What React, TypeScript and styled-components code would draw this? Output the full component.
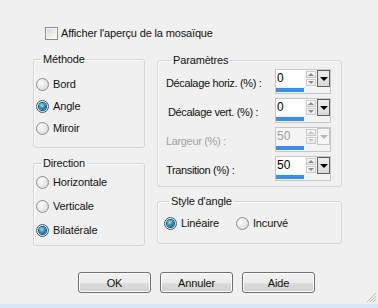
import React from "react";
import styled, { createGlobalStyle, css } from "styled-components";

const Global = createGlobalStyle`
  html, body { margin: 0; padding: 0; background: #f0f0f0; }
  body { font-family: "Liberation Sans", Arial, sans-serif; font-size: 11px; color: #111; letter-spacing: -0.15px; }
  * { box-sizing: border-box; }
`;

const Dialog = styled.div`
  position: relative;
  width: 378px;
  height: 308px;
  background: #f0f0f0;
  display: flex;
  flex-direction: column;
  overflow: hidden;
`;

const CheckRow = styled.label`
  display: flex;
  align-items: center;
  gap: 3px;
  margin: 27px 0 0 45px;
  height: 13px;
  line-height: 13px;
`;

const CheckBox = styled.span`
  width: 13px;
  height: 13px;
  border: 1px solid #8e8f8f;
  background: linear-gradient(135deg, #d6d6d6 0%, #eeeeee 60%, #fafafa 100%);
  box-shadow: inset 0 0 0 1px #f6f6f6;
  flex: none;
`;

const Columns = styled.div`
  display: flex;
  gap: 12px;
  margin: 13px 0 0 33px;
`;

const Column = styled.div<{ $w: number; $top?: number }>`
  display: flex;
  flex-direction: column;
  width: ${(p) => p.$w}px;
  margin-top: ${(p) => p.$top ?? 0}px;
`;

const Group = styled.fieldset<{ $pt: number; $pb: number; $pl: number; $mt?: number }>`
  margin: ${(p) => p.$mt ?? 0}px 0 0 0;
  padding: ${(p) => p.$pt}px 4px ${(p) => p.$pb}px ${(p) => p.$pl}px;
  border: 1px solid #d5d5d5;
  border-radius: 3px;
  box-shadow: inset 1px 1px 0 #fbfbfb;
  min-width: 0;
`;

const Legend = styled.legend`
  margin-left: 5px;
  padding: 0 2px 0 2px;
  line-height: 13px;
  height: 13px;
  font-size: 11px;
`;

const RadioRow = styled.label<{ $h: number }>`
  display: flex;
  align-items: center;
  height: ${(p) => p.$h}px;
  gap: 4px;
`;

const RadioInline = styled.div`
  display: flex;
  gap: 17px;
`;

const RadioDot = styled.span<{ $on?: boolean }>`
  width: 13px;
  height: 13px;
  border-radius: 50%;
  border: 1px solid ${(p) => (p.$on ? "#2c6282" : "#8e8f8f")};
  background: radial-gradient(circle at 35% 35%, #fcfcfc 0%, #e6e6e6 55%, #cfcfcf 100%);
  display: flex;
  align-items: center;
  justify-content: center;
  flex: none;
  ${(p) =>
    p.$on &&
    css`
      &::after {
        content: "";
        width: 7px;
        height: 7px;
        border-radius: 50%;
        background: radial-gradient(circle at 40% 35%, #a9e4ff 0%, #3a93c4 40%, #0d4a6e 100%);
        box-shadow: 0 0 0 1px #1b4c66;
      }
    `}
`;

const ParamRow = styled.div<{ $indent?: number }>`
  display: flex;
  align-items: center;
  height: 25px;
  padding-left: ${(p) => p.$indent ?? 0}px;
`;

const ParamLabel = styled.span<{ $disabled?: boolean; $w: number }>`
  width: ${(p) => p.$w}px;
  color: ${(p) => (p.$disabled ? "#a3a3a3" : "#111")};
  padding-top: 2px;
  letter-spacing: -0.35px;
`;

const ParamList = styled.div`
  display: flex;
  flex-direction: column;
  gap: 4px;
`;

const Spin = styled.div`
  width: 56px;
  height: 25px;
  border: 1px solid #c6c6c6;
  background: #f3f3f3;
  display: flex;
  flex-direction: column;
`;

const SpinTop = styled.div`
  display: flex;
  height: 17px;
`;

const Edit = styled.div<{ $disabled?: boolean }>`
  flex: 1;
  background: ${(p) => (p.$disabled ? "#f4f4f4" : "#fff")};
  color: ${(p) => (p.$disabled ? "#a0a0a0" : "#000")};
  font-size: 12px;
  line-height: 17px;
  padding-left: 1px;
  letter-spacing: 0;
`;

const Arrows = styled.div`
  width: 12px;
  display: flex;
  flex-direction: column;
  gap: 1px;
  padding: 1px 1px;
  background: #f6f6f6;
`;

const ArrowBtn = styled.span<{ $dir: "up" | "down"; $disabled?: boolean }>`
  flex: 1;
  border: 1px solid #c9c9c9;
  background: linear-gradient(#fafafa, #e9e9e9);
  display: flex;
  align-items: center;
  justify-content: center;
  &::after {
    content: "";
    border-left: 3px solid transparent;
    border-right: 3px solid transparent;
    ${(p) =>
      p.$dir === "up"
        ? css`border-bottom: 3px solid ${p.$disabled ? "#c8c8c8" : "#8a8a8a"};`
        : css`border-top: 3px solid ${p.$disabled ? "#c8c8c8" : "#8a8a8a"};`}
  }
`;

const DropBtn = styled.span<{ $disabled?: boolean }>`
  width: 13px;
  border: 1px solid ${(p) => (p.$disabled ? "#c4c4c4" : "#5e5e5e")};
  background: ${(p) => (p.$disabled ? "#f4f4f4" : "linear-gradient(#ededed, #d9d9d9)")};
  display: flex;
  align-items: center;
  justify-content: center;
  &::after {
    content: "";
    border-left: 4px solid transparent;
    border-right: 4px solid transparent;
    border-top: 4px solid ${(p) => (p.$disabled ? "#b8b8b8" : "#000")};
  }
`;

const Bar = styled.div`
  margin: 1px 0 0 0;
  width: 28px;
  height: 4px;
  background: #3a8ee6;
`;

const ButtonRow = styled.div`
  display: flex;
  gap: 9px;
  margin: 26px 0 0 78px;
`;

const Button = styled.button`
  width: 73px;
  height: 21px;
  border: 1px solid #707070;
  border-radius: 3px;
  background: linear-gradient(#f2f2f2 0%, #ebebeb 50%, #dddddd 51%, #cfcfcf 100%);
  box-shadow: inset 0 0 0 1px #fcfcfc;
  font-family: "Liberation Sans", Arial, sans-serif;
  font-size: 11px;
  letter-spacing: -0.15px;
  color: #111;
  padding: 0;
`;

const StatusStrip = styled.div`
  margin-top: auto;
  height: 4px;
  background: #dbe7f4;
`;

const Grip = styled.svg`
  position: absolute;
  right: 1px;
  bottom: 5px;
`;

function Radio({ label, on, h }: { label: string; on?: boolean; h: number }) {
  return (
    <RadioRow $h={h}>
      <RadioDot $on={on} />
      <span>{label}</span>
    </RadioRow>
  );
}

function SpinField({ value, disabled }: { value: string; disabled?: boolean }) {
  return (
    <Spin>
      <SpinTop>
        <Edit $disabled={disabled}>{value}</Edit>
        <Arrows>
          <ArrowBtn $dir="up" $disabled={disabled} />
          <ArrowBtn $dir="down" $disabled={disabled} />
        </Arrows>
        <DropBtn $disabled={disabled} />
      </SpinTop>
      <Bar />
    </Spin>
  );
}

const params = [
  { label: "Décalage horiz. (%) :", value: "0", indent: 0 },
  { label: "Décalage vert. (%) :", value: "0", indent: 2 },
  { label: "Largeur (%) :", value: "50", indent: 0, disabled: true },
  { label: "Transition (%) :", value: "50", indent: 0 },
];

export default function App() {
  return (
    <Dialog>
      <Global />
      <CheckRow>
        <CheckBox />
        <span>Afficher l'aperçu de la mosaïque</span>
      </CheckRow>
      <Columns>
        <Column $w={112}>
          <Group $pt={7} $pb={8} $pl={2}>
            <Legend>Méthode</Legend>
            <Radio label="Bord" h={22} />
            <Radio label="Angle" on h={22} />
            <Radio label="Miroir" h={22} />
          </Group>
          <Group $pt={0} $pb={3} $pl={2} $mt={9}>
            <Legend>Direction</Legend>
            <Radio label="Horizontale" h={24} />
            <Radio label="Verticale" h={24} />
            <Radio label="Bilatérale" on h={24} />
          </Group>
        </Column>
        <Column $w={185} $top={1}>
          <Group $pt={2} $pb={5} $pl={8}>
            <Legend>Paramètres</Legend>
            <ParamList>
              {params.map((p) => (
                <ParamRow key={p.label} $indent={p.indent}>
                  <ParamLabel $w={109 - p.indent} $disabled={p.disabled}>
                    {p.label}
                  </ParamLabel>
                  <SpinField value={p.value} disabled={p.disabled} />
                </ParamRow>
              ))}
            </ParamList>
          </Group>
          <Group $pt={4} $pb={9} $pl={6} $mt={8}>
            <Legend>Style d'angle</Legend>
            <RadioInline>
              <Radio label="Linéaire" on h={22} />
              <Radio label="Incurvé" h={22} />
            </RadioInline>
          </Group>
        </Column>
      </Columns>
      <ButtonRow>
        <Button>OK</Button>
        <Button>Annuler</Button>
        <Button>Aide</Button>
      </ButtonRow>
      <StatusStrip />
      <Grip width="10" height="10" viewBox="0 0 10 10">
        <path d="M9 3 L3 9 M9 6 L6 9 M9 0 L0 9" stroke="#b8b8b8" strokeWidth="1" />
      </Grip>
    </Dialog>
  );
}
